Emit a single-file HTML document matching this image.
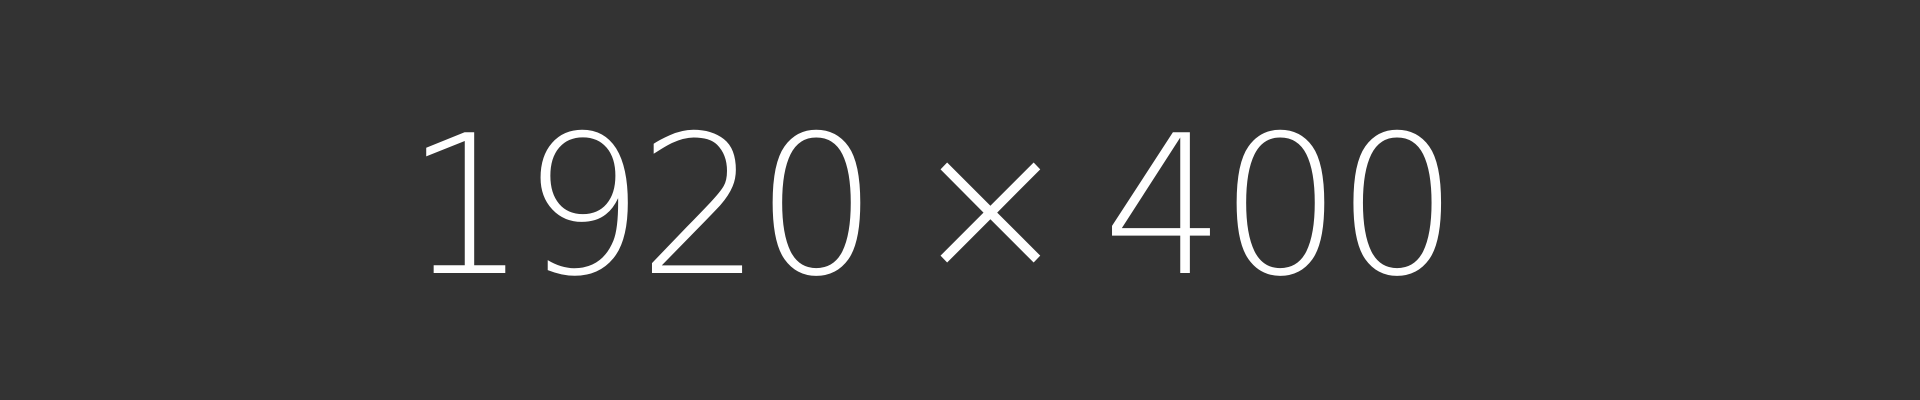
<!DOCTYPE html>
<html><head><style>
html,body{margin:0;padding:0;width:1920px;height:400px;background:#333333;overflow:hidden}
.t{position:absolute;left:-31px;top:0;width:1920px;height:400px;display:flex;align-items:center;justify-content:center;color:#fff;font-family:"DejaVu Sans","Liberation Sans",sans-serif;font-size:193px;font-weight:200;letter-spacing:-6px;word-spacing:-18px;line-height:1;white-space:pre}
</style></head><body>
<div class="t"><span style="margin-top:12px">1920 × 400</span></div>
</body></html>
